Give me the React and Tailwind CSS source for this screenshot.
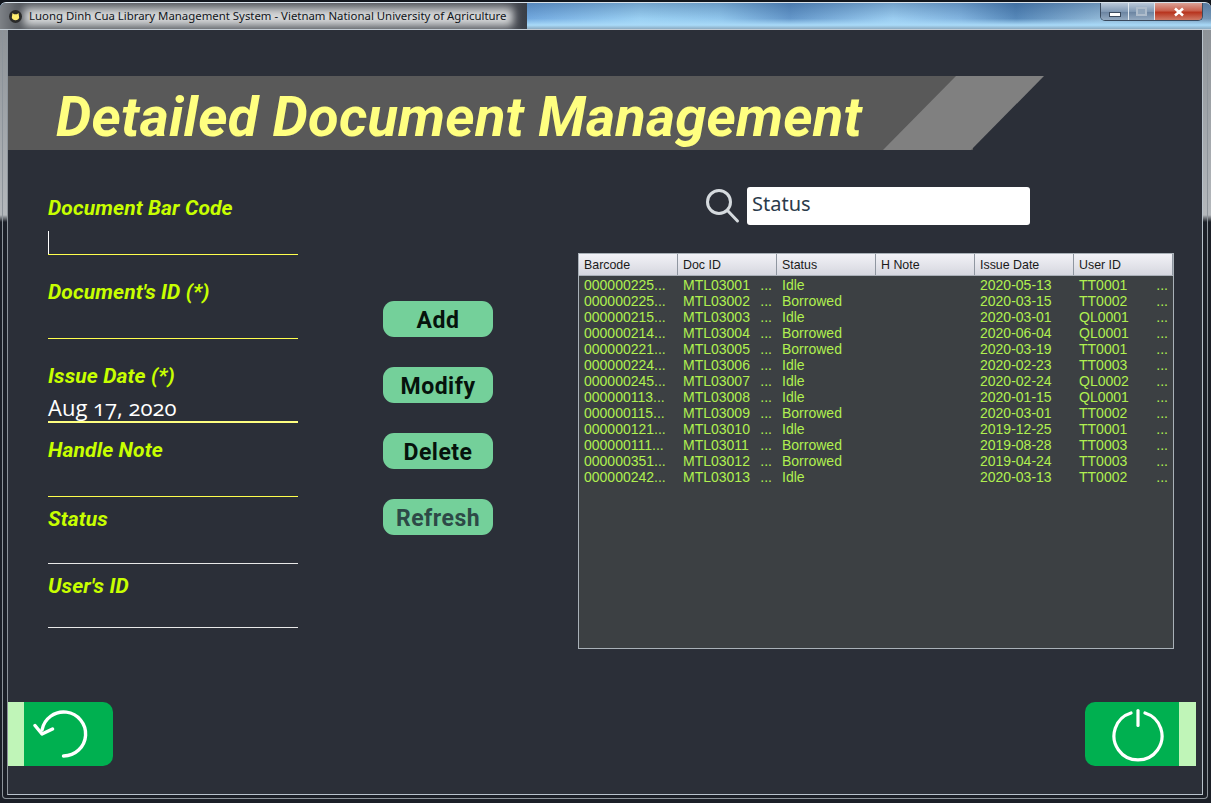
import React from "react";

const rows = [
  ["000000225...", "MTL03001", "Idle", "2020-05-13", "TT0001"],
  ["000000225...", "MTL03002", "Borrowed", "2020-03-15", "TT0002"],
  ["000000215...", "MTL03003", "Idle", "2020-03-01", "QL0001"],
  ["000000214...", "MTL03004", "Borrowed", "2020-06-04", "QL0001"],
  ["000000221...", "MTL03005", "Borrowed", "2020-03-19", "TT0001"],
  ["000000224...", "MTL03006", "Idle", "2020-02-23", "TT0003"],
  ["000000245...", "MTL03007", "Idle", "2020-02-24", "QL0002"],
  ["000000113...", "MTL03008", "Idle", "2020-01-15", "QL0001"],
  ["000000115...", "MTL03009", "Borrowed", "2020-03-01", "TT0002"],
  ["000000121...", "MTL03010", "Idle", "2019-12-25", "TT0001"],
  ["000000111...", "MTL03011", "Borrowed", "2019-08-28", "TT0003"],
  ["000000351...", "MTL03012", "Borrowed", "2019-04-24", "TT0003"],
  ["000000242...", "MTL03013", "Idle", "2020-03-13", "TT0002"],
];

const headers = ["Barcode", "Doc ID", "Status", "H Note", "Issue Date", "User ID"];

const fields = [
  { label: "Document Bar Code", box: "h-[59px]", line: "border-b border-[#ffff4d]", caret: true },
  { label: "Document's ID (*)", box: "h-[59px] mt-[25px]", line: "border-b border-[#ffff4d]" },
  { label: "Issue Date (*)", box: "h-[59px] mt-[25px]", line: "border-b-2 border-[#ffff80]", value: "Aug 17, 2020" },
  { label: "Handle Note", box: "h-[59px] mt-[15px]", line: "border-b border-[#ffff4d]" },
  { label: "Status", box: "h-[57px] mt-[10px]", line: "border-b border-[#e8e8e8]" },
  { label: "User's ID", box: "h-[54px] mt-[10px]", line: "border-b border-[#e8e8e8]" },
];

const actions = [
  { label: "Add", color: "text-[#06130c]" },
  { label: "Modify", color: "text-[#06130c]" },
  { label: "Delete", color: "text-[#06130c]" },
  { label: "Refresh", color: "text-[#2d4a47]" },
];

function Field({ f }) {
  return (
    <div className={`flex flex-col w-[250px] ${f.box}`}>
      <div className="h-[24px] leading-[24px] text-[21px] tracking-[0.12px] font-bold italic text-[#c8ff00] font-['Roboto',sans-serif] whitespace-nowrap">
        {f.label}
      </div>
      <div className={`flex-1 flex items-end ${f.line}`}>
        {f.caret && <div className="w-px h-[23px] bg-white" />}
        {f.value && (
          <div className="text-[22px] leading-[28px] text-white font-['Open_Sans',sans-serif] oldstyle-nums">
            {f.value}
          </div>
        )}
      </div>
    </div>
  );
}

export default function App() {
  return (
    <div className="w-[1211px] h-[803px] flex flex-col overflow-hidden bg-[#1b1f27] font-['Liberation_Sans',sans-serif]">
      {/* title bar */}
      <div className="h-[30px] shrink-0 pt-[2px] bg-[#12161d]">
        <div className="relative h-[28px] flex items-start rounded-t-[6px] border-t border-b border-t-[#d9e2ea] border-b-[#c3ccd4] overflow-hidden bg-[linear-gradient(180deg,rgba(40,80,130,0.35),rgba(150,210,250,0.1)_60%,#a9daf8_85%,#8aa9c0),linear-gradient(90deg,#6fa5dc_530px,#9bd0f2_640px,#8fc4ea_720px,#5e90c4_790px,#9ccdf0_893px,#7fb0dc_960px,#4f80b2_1016px,#8fb4d2_1100px,#6f8fae_1211px)]">
          <div className="relative w-[527px] h-[26px] shrink-0 flex items-center pl-[9px] gap-[7px] bg-[linear-gradient(90deg,#7d8186,#55595f_20px,#4f535a_500px,#3a3e46)]">
            <div className="absolute left-[24px] right-[14px] top-[5px] bottom-[3px] bg-[#d6d8d9] blur-[4px]" />
            <svg className="relative" width="13" height="13" viewBox="0 0 13 13">
              <circle cx="6.5" cy="6.5" r="6.5" fill="#2a2a2a" />
              <path d="M3.5 3 L5 4.2 L8 4.2 L9.5 3 L10.2 7.5 A3.8 3.6 0 0 1 2.8 7.5 Z" fill="#ffee70" />
            </svg>
            <span className="relative text-[11.4px] leading-none text-[#10141a] font-['Noto_Sans',sans-serif] whitespace-nowrap">
              Luong Dinh Cua Library Management System - Vietnam National University of Agriculture
            </span>
          </div>
          <div className="flex-1" />
          <div className="flex h-[18px] mr-[8px] border border-[#3a4a5e] border-t-0 rounded-b-[5px] overflow-hidden">
            <div className="w-[28px] flex items-end justify-center pb-[3px] border-r border-[#dfe7ee] bg-[linear-gradient(180deg,#b9c8d8,#8199b4_50%,#6c85a2_55%,#93a9c0)]">
              <div className="w-[12px] h-[5px] bg-white border border-[#3a4a5e]" />
            </div>
            <div className="w-[26px] flex items-center justify-center border-r border-[#dfe7ee] bg-[linear-gradient(180deg,#b9c8d8,#8199b4_50%,#6c85a2_55%,#93a9c0)]">
              <div className="w-[11px] h-[9px] border-2 border-[#aebccb] bg-[#8fa4ba]" />
            </div>
            <div className="w-[47px] flex items-center justify-center bg-[linear-gradient(180deg,#dba196,#c9614e_45%,#b8351f_55%,#cf7a66)]">
              <svg width="12" height="10" viewBox="0 0 12 10">
                <path d="M2 1.5 L10 8.5 M10 1.5 L2 8.5" stroke="#fff" strokeWidth="2.6" />
              </svg>
            </div>
          </div>
        </div>
      </div>

      {/* window body */}
      <div className="flex h-[765px] shrink-0">
        <div className="w-[7px] shrink-0 flex pl-[2px] bg-[linear-gradient(180deg,#8e9398,#b4b8bc_185px,#1b1f27_192px)]">
          <div className="w-px bg-[#8d949b]" />
        </div>
        <div className="w-[1196px] shrink-0 flex flex-col bg-[#2b2f38] border border-t-0 border-[#b9c3cc] border-l-[#8d949b]">
          {/* banner */}
          <div className="relative mt-[46px] h-[74px] w-[965px] bg-[#595959] flex items-center pl-[48px] pt-[7px] shrink-0">
            <h1 className="text-[56px] tracking-[0.22px] leading-none font-bold italic text-[#ffff80] font-['Roboto',sans-serif] whitespace-nowrap">
              Detailed Document Management
            </h1>
            <div className="absolute left-[875px] top-0 h-[74px] w-[161px] bg-[#808080] [clip-path:polygon(73px_0,161px_0,88px_100%,0_100%)]" />
          </div>

          <div className="flex flex-1 min-h-0">
            {/* left form */}
            <div className="w-[335px] pl-[40px] pt-[46px] shrink-0">
              {fields.map((f) => (
                <Field key={f.label} f={f} />
              ))}
            </div>

            {/* actions */}
            <div className="w-[235px] shrink-0 pl-[40px] pt-[151px] flex flex-col gap-[30px]">
              {actions.map((a) => (
                <button
                  key={a.label}
                  className={`w-[110px] h-[36px] pt-[2px] rounded-[11px] bg-[#74d09a] text-[23px] font-bold tracking-[0.5px] font-['Roboto',sans-serif] leading-none flex items-center justify-center ${a.color}`}
                >
                  {a.label}
                </button>
              ))}
            </div>

            {/* right */}
            <div className="flex-1 flex flex-col pt-[37px]">
              <div className="flex items-center h-[38px] pl-[127px] gap-[7px]">
                <svg width="35" height="36" viewBox="0 0 35 36" fill="none" stroke="#d5dade" strokeWidth="3" strokeLinecap="round">
                  <circle cx="14" cy="14" r="11.5" />
                  <path d="M22.5 22.5 L32.5 33" />
                </svg>
                <div className="w-[283px] h-[38px] rounded-[3px] bg-white pl-[5px] pb-[4px] flex items-center text-[20px] text-[#2b3b4b] font-['Noto_Sans',sans-serif]">
                  Status
                </div>
              </div>

              <div className="mt-[28px] w-[596px] h-[396px] flex flex-col border border-[#a9b1b8] bg-[#3c4043]">
                <div className="flex h-[22px] shrink-0 border-b border-[#aab0b8] bg-[linear-gradient(180deg,#f2f2f7,#d6d7df)]">
                  {headers.map((h) => (
                    <div
                      key={h}
                      className="w-[99px] pl-[5px] text-[12.4px] leading-[22px] text-[#1a1a1a] border-r border-[#8f96a0]"
                    >
                      {h}
                    </div>
                  ))}
                </div>
                <div className="pt-[1px]">
                  {rows.map((r, i) => (
                    <div key={i} className="flex h-[16px] text-[14px] leading-[16px] text-[#b0f050]">
                      <div className="w-[99px] pl-[5px] whitespace-nowrap">{r[0]}</div>
                      <div className="w-[99px] pl-[5px] pr-[5px] flex justify-between">
                        <span>{r[1]}</span>
                        <span>...</span>
                      </div>
                      <div className="w-[99px] pl-[5px]">{r[2]}</div>
                      <div className="w-[99px]" />
                      <div className="w-[100px] pl-[5px]">{r[3]}</div>
                      <div className="w-[98px] pl-[4px] pr-[5px] flex justify-between">
                        <span>{r[4]}</span>
                        <span>...</span>
                      </div>
                    </div>
                  ))}
                </div>
              </div>
            </div>
          </div>

          {/* bottom */}
          <div className="flex justify-between items-start h-[92px] shrink-0 pr-[6px]">
            <div className="w-[105px] h-[64px] flex rounded-r-[10px] overflow-hidden bg-[#00b050]">
              <div className="w-[16px] bg-[#c0f5b8]" />
              <div className="flex-1 flex items-center justify-center">
                <svg width="72" height="52" viewBox="0 0 72 52" fill="none" stroke="#fff" strokeWidth="3.4" strokeLinecap="round" strokeLinejoin="round">
                  <path d="M30.5 48 A22 22 0 1 0 9 22" />
                  <path d="M2 17.5 L9 26 L19.5 21" />
                </svg>
              </div>
            </div>
            <div className="w-[111px] h-[64px] flex rounded-l-[10px] overflow-hidden bg-[#00b050]">
              <div className="flex-1 flex items-center justify-start pl-[26px]">
                <svg width="54" height="58" viewBox="0 0 54 58" fill="none" stroke="#fff" strokeWidth="3.2" strokeLinecap="round">
                  <path d="M20 8 A24 24 0 1 0 34 8" />
                  <path d="M27 5.5 L27 20.5" />
                </svg>
              </div>
              <div className="w-[17px] bg-[#c0f5b8]" />
            </div>
          </div>
        </div>
        <div className="w-[8px] shrink-0 flex pl-[4px] bg-[linear-gradient(180deg,#8e9398,#b4b8bc_185px,#1b1f27_192px)]">
          <div className="w-px bg-[#8d949b]" />
        </div>
      </div>

      {/* bottom frame */}
      <div className="h-[8px] shrink-0 px-[2px]">
        <div className="h-[4px] mr-[1px] border-b border-x border-[#8d949b] rounded-b-[4px]" />
      </div>
    </div>
  );
}
